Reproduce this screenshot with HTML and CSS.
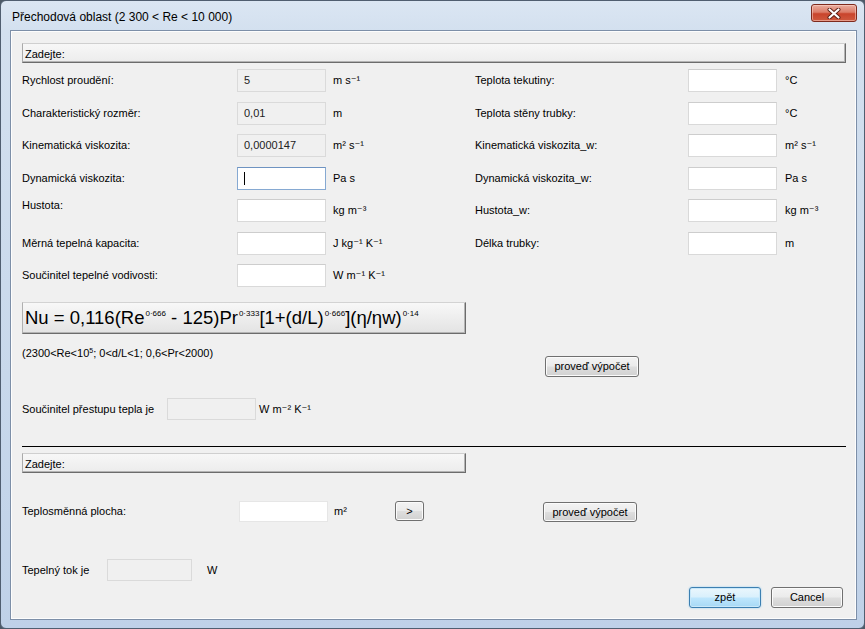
FILE: index.html
```html
<!DOCTYPE html>
<html lang="cs">
<head>
<meta charset="utf-8">
<title>Přechodová oblast</title>
<link rel="stylesheet" href="styles.css">
</head>
<body>
<div class="window">
  <div class="titlebar">
    <span class="title">Přechodová oblast (2 300 &lt; Re &lt; 10 000)</span>
    <div class="close">
      <svg width="14" height="11" viewBox="0 0 14 11">
        <path d="M2.5 1.5 L11.5 9.5 M11.5 1.5 L2.5 9.5" stroke="#5b1d12" stroke-width="4" stroke-linecap="round"/>
        <path d="M2.5 1.5 L11.5 9.5 M11.5 1.5 L2.5 9.5" stroke="#ffffff" stroke-width="2.2" stroke-linecap="round"/>
      </svg>
    </div>
  </div>
  <div class="client">
    <div class="bar">Zadejte:</div>

    <div class="form-grid">
      <span class="label">Rychlost proudění:</span>
      <span class="field disabled">5</span>
      <span class="unit">m s⁻¹</span>
      <span class="label">Teplota tekutiny:</span>
      <span class="field"></span>
      <span class="unit unit-r">°C</span>

      <span class="label">Charakteristický rozměr:</span>
      <span class="field disabled">0,01</span>
      <span class="unit">m</span>
      <span class="label">Teplota stěny trubky:</span>
      <span class="field"></span>
      <span class="unit unit-r">°C</span>

      <span class="label">Kinematická viskozita:</span>
      <span class="field disabled">0,0000147</span>
      <span class="unit">m² s⁻¹</span>
      <span class="label">Kinematická viskozita_w:</span>
      <span class="field"></span>
      <span class="unit unit-r">m² s⁻¹</span>

      <span class="label">Dynamická viskozita:</span>
      <span class="field focused"><span class="caret"></span></span>
      <span class="unit">Pa s</span>
      <span class="label">Dynamická viskozita_w:</span>
      <span class="field"></span>
      <span class="unit unit-r">Pa s</span>

      <span class="label label-top">Hustota:</span>
      <span class="field"></span>
      <span class="unit">kg m⁻³</span>
      <span class="label">Hustota_w:</span>
      <span class="field"></span>
      <span class="unit unit-r">kg m⁻³</span>

      <span class="label">Měrná tepelná kapacita:</span>
      <span class="field"></span>
      <span class="unit">J kg⁻¹ K⁻¹</span>
      <span class="label">Délka trubky:</span>
      <span class="field"></span>
      <span class="unit unit-r">m</span>

      <span class="label">Součinitel tepelné vodivosti:</span>
      <span class="field"></span>
      <span class="unit">W m⁻¹ K⁻¹</span>
    </div>

    <div class="formula">Nu = 0,116(Re<span class="sup">0·666</span> - 125)Pr<span class="sup">0·333</span>[1+(d/L)<span class="sup">0·666</span>](η/ηw)<span class="sup">0·14</span></div>

    <div class="note-row">
      <span class="note">(2300&lt;Re&lt;10<span class="sup-small">5</span>; 0&lt;d/L&lt;1; 0,6&lt;Pr&lt;2000)</span>
      <span class="btn btn-calc">proveď výpočet</span>
    </div>

    <div class="result-row">
      <span class="label result-label">Součinitel přestupu tepla je</span>
      <span class="field disabled field-22"></span>
      <span class="unit result-unit">W m⁻² K⁻¹</span>
    </div>

    <div class="divider"></div>

    <div class="bar bar-narrow">Zadejte:</div>

    <div class="area-row">
      <span class="label area-label">Teplosměnná plocha:</span>
      <span class="field plain area-field"></span>
      <span class="unit area-unit">m²</span>
      <span class="btn btn-arrow">&gt;</span>
      <span class="btn btn-calc2">proveď výpočet</span>
    </div>

    <div class="flux-row">
      <span class="label flux-label">Tepelný tok je</span>
      <span class="field disabled flux-field"></span>
      <span class="unit flux-unit">W</span>
    </div>

    <div class="footer">
      <span class="btn btn-default">zpět</span>
      <span class="btn btn-cancel">Cancel</span>
    </div>
  </div>
</div>
</body>
</html>
```

FILE: styles.css
```css
html, body {
  margin: 0;
  padding: 0;
}
body {
  width: 865px;
  height: 629px;
  overflow: hidden;
  background: #4d5a68;
  font-family: "Liberation Sans", "DejaVu Sans", sans-serif;
  color: #000;
}
.window {
  width: 865px;
  height: 629px;
  box-sizing: border-box;
  display: flex;
  flex-direction: column;
  border: 1px solid #505e70;
  border-radius: 6px;
  padding: 0 7px 8px 9px;
  background: linear-gradient(to bottom, #dbe6f3 0px, #d3e0ef 30px, #c8d8eb 60%, #bfd1e8 100%);
}
.titlebar {
  height: 29px;
  display: flex;
  align-items: flex-start;
  flex-shrink: 0;
}
.title {
  margin-top: 9px;
  margin-left: 2px;
  font-size: 12px;
  line-height: 14px;
  color: #000;
}
.close {
  margin-left: auto;
  margin-top: 3px;
  width: 46px;
  height: 18px;
  box-sizing: border-box;
  border: 1px solid #7e2a1d;
  border-radius: 3px;
  background: linear-gradient(to bottom, #e9ad9f 0%, #dc7c68 45%, #c9442c 55%, #cf5a3f 100%);
  box-shadow: inset 0 0 0 1px rgba(255, 220, 210, 0.5);
  display: flex;
  align-items: center;
  justify-content: center;
}
.client {
  flex: 1;
  box-sizing: border-box;
  background: #f0f0f0;
  border: 1px solid #7d8fa8;
  box-shadow: inset 0 0 0 1px #fdfdfd;
  padding: 12px 10px 0 11px;
  display: flex;
  flex-direction: column;
  font-size: 11px;
  line-height: 13px;
}
.bar {
  height: 20px;
  box-sizing: border-box;
  border: 1px solid;
  border-color: #cfcfcf #6c6c6c #6c6c6c #aaaaaa;
  box-shadow: inset -1px -1px 0 #b4b4b4;
  background: linear-gradient(to bottom, #f7f7f7, #ececec);
  padding: 4px 0 0 2px;
  font-size: 11px;
  line-height: 13px;
  flex-shrink: 0;
}
.bar-narrow {
  width: 444px;
  margin-top: 6px;
}
.form-grid {
  margin-top: 6px;
  display: grid;
  grid-template-columns: 215px 89px 149px 213px 89px auto;
  grid-auto-rows: 23px;
  row-gap: 9.5px;
  align-items: center;
}
.label {
  white-space: nowrap;
}
.label-top {
  align-self: start;
}
.unit {
  padding-left: 7px;
  white-space: nowrap;
}
.unit-r {
  padding-left: 8px;
}
.field {
  display: flex;
  align-items: center;
  height: 23px;
  box-sizing: border-box;
  border: 1px solid #d9d9d9;
  border-top-color: #cdcdcd;
  background: #ffffff;
  padding-left: 6px;
  color: #222;
}
.field.disabled {
  background: #f0f0f0;
  border-color: #dadada;
}
.field.focused {
  border-color: #86a9d2;
  border-top-color: #6e93c1;
}
.caret {
  width: 1px;
  height: 13px;
  background: #000;
}
.formula {
  margin-top: 15px;
  width: 444px;
  height: 32px;
  box-sizing: border-box;
  border: 1px solid;
  border-color: #d3d3d3 #6c6c6c #6c6c6c #b0b0b0;
  box-shadow: inset -1px -1px 0 #b4b4b4;
  background: linear-gradient(to bottom, #f8f8f8, #e3e3e3);
  padding-left: 2px;
  font-size: 18.5px;
  line-height: 30px;
  white-space: nowrap;
  flex-shrink: 0;
}
.sup {
  font-size: 8px;
  vertical-align: 8px;
  line-height: 0;
  margin-left: 1px;
}
.sup-small {
  font-size: 7px;
  vertical-align: 4px;
  line-height: 0;
}
.note-row {
  margin-top: 12.5px;
  display: flex;
  align-items: flex-start;
}
.note {
  width: 523px;
  white-space: nowrap;
}
.btn {
  display: flex;
  align-items: center;
  justify-content: center;
  box-sizing: border-box;
  height: 21px;
  border: 1px solid #707070;
  border-radius: 3px;
  background: linear-gradient(to bottom, #f3f3f3 0%, #ebebeb 48%, #dedede 52%, #d1d1d1 100%);
  box-shadow: inset 0 0 0 1px #fbfbfb;
  font-size: 11px;
  white-space: nowrap;
}
.btn-calc {
  width: 94px;
  margin-top: 9.5px;
}
.result-row {
  margin-top: 21px;
  display: flex;
  align-items: center;
  height: 22px;
}
.result-label {
  width: 145px;
}
.field-22 {
  width: 89px;
  height: 22px;
}
.result-unit {
  padding-left: 3px;
}
.divider {
  margin-top: 26px;
  height: 1px;
  background: #000;
  flex-shrink: 0;
}
.area-row {
  margin-top: 28px;
  display: flex;
  align-items: flex-start;
  height: 21px;
}
.area-label {
  width: 217px;
  align-self: center;
}
.field.plain {
  border-color: #e6e6e6;
}
.area-field {
  width: 89px;
  height: 21px;
}
.area-unit {
  width: 67px;
  box-sizing: border-box;
  padding-left: 6px;
  align-self: center;
}
.btn-arrow {
  width: 29px;
  height: 20px;
}
.btn-calc2 {
  margin-left: 119px;
  width: 94px;
  height: 20px;
  margin-top: 1px;
}
.flux-row {
  margin-top: 37px;
  display: flex;
  align-items: center;
  height: 22px;
}
.flux-label {
  width: 85px;
}
.flux-field {
  width: 85px;
  height: 22px;
}
.flux-unit {
  padding-left: 15px;
}
.footer {
  margin-top: 6px;
  display: flex;
  justify-content: flex-end;
  gap: 10px;
  padding-right: 3px;
}
.btn-default,
.btn-cancel {
  width: 72px;
  height: 21px;
}
.btn-default {
  border-color: #3c7fb1;
  background: linear-gradient(to bottom, #eaf6fd 0%, #d9f0fc 48%, #bee6fd 52%, #a7d9f5 100%);
  box-shadow: inset 0 0 0 1px #c9e8f9, 0 0 2px #8ecbf0;
}
```
